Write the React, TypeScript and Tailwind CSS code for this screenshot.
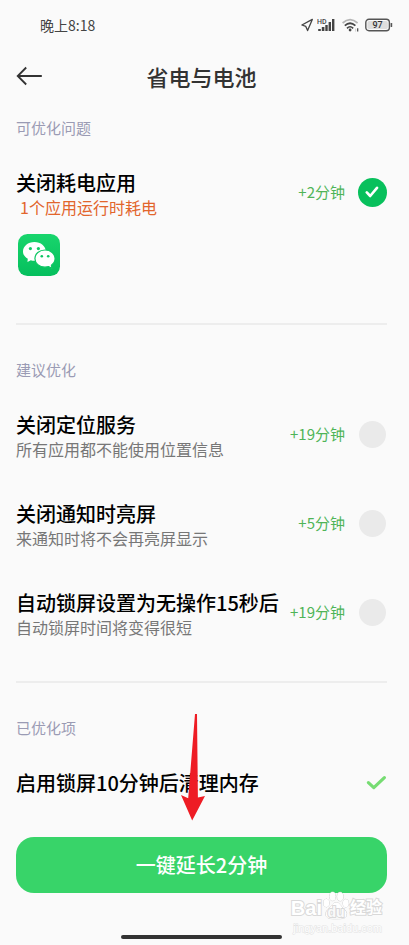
import { useState } from 'react';
import clsx from 'clsx';

interface Suggestion {
  id: string;
  title: string;
  detail: string;
  gain: string;
  warning?: boolean;
}

const issue: Suggestion = {
  id: 'close-apps',
  title: '关闭耗电应用',
  detail: '1个应用运行时耗电',
  gain: '+2分钟',
  warning: true,
};

const suggestions: Suggestion[] = [
  { id: 'location', title: '关闭定位服务', detail: '所有应用都不能使用位置信息', gain: '+19分钟' },
  { id: 'notify', title: '关闭通知时亮屏', detail: '来通知时将不会再亮屏显示', gain: '+5分钟' },
  { id: 'lock', title: '自动锁屏设置为无操作15秒后', detail: '自动锁屏时间将变得很短', gain: '+19分钟' },
];

function StatusBar() {
  return (
    <div className="flex h-[50px] items-center justify-between pl-10 pr-4 text-[#444]">
      <span className="text-sm">晚上8:18</span>
      <div className="flex items-center">
        <svg width="12" height="14" viewBox="0 0 12 14" fill="none" stroke="currentColor" strokeWidth="1.3" strokeLinejoin="round">
          <path d="M11.3 1.4 L0.9 7 L4.8 8.4 L6.6 12.6 Z" />
        </svg>
        <svg className="ml-1" width="19" height="14" viewBox="0 0 19 14" fill="currentColor">
          <text x="0" y="5.5" fontSize="7" fontWeight="500" fontFamily="Roboto, sans-serif">HD</text>
          <rect x="1.2" y="11" width="2.6" height="2" />
          <rect x="4.8" y="9" width="2.6" height="4" />
          <rect x="8.3" y="7" width="2.4" height="6" />
          <rect x="11.6" y="4" width="2.4" height="9" />
          <rect x="15" y="1" width="2.4" height="12" />
        </svg>
        <svg className="ml-1.5" width="17" height="14" viewBox="0 0 17 14" fill="none" strokeWidth="1.7">
          <path d="M0.6 5 Q8 -1.8 15.6 5" stroke="#b5b5b5" />
          <path d="M2.8 7.7 Q8 2.8 13.4 7.7" stroke="currentColor" />
          <path d="M5 10.3 Q8 7.2 11.2 10.3" stroke="currentColor" />
          <circle cx="8.1" cy="12" r="1.4" fill="currentColor" />
          <path d="M15.7 10.2 V13.4" stroke="currentColor" strokeWidth="1.2" />
          <path d="M13.6 10.6 V13.6" stroke="#c8c8c8" strokeWidth="0.8" />
        </svg>
        <svg className="ml-1.5" width="28" height="14" viewBox="0 0 28 14">
          <rect x="0.8" y="1.3" width="23.6" height="11.4" rx="3.2" fill="#fafafa" stroke="#555" strokeWidth="1.4" />
          <rect x="2.4" y="2.9" width="20.4" height="8.2" rx="1.8" fill="#dedede" />
          <rect x="25.6" y="5" width="1.6" height="4" rx="0.6" fill="#555" />
          <text x="12.6" y="10.2" textAnchor="middle" fontSize="9" fontWeight="500" fontFamily="Roboto, sans-serif" fill="#333">97</text>
        </svg>
      </div>
    </div>
  );
}

function SectionLabel({ children }: { children: string }) {
  return <h2 className="mb-[33px] text-[15px] leading-5 text-[#9a9bb4]">{children}</h2>;
}

function Divider() {
  return <hr className="h-0.5 border-0 bg-[#ededed]" />;
}

interface OptionRowProps {
  item: Suggestion;
  checked: boolean;
  onToggle: (id: string) => void;
}

function OptionRow({ item, checked, onToggle }: OptionRowProps) {
  return (
    <label htmlFor={item.id} className="flex items-center justify-between">
      <span className="flex flex-col">
        <span className="whitespace-nowrap text-xl leading-6 font-medium text-black">{item.title}</span>
        <span className={clsx('text-base leading-6', item.warning ? 'pl-1 text-[#e2652c]' : 'text-[#777]')}>
          {item.detail}
        </span>
      </span>
      <span className="flex items-center gap-3 pb-1.5">
        <span className="whitespace-nowrap text-[15px] leading-5 text-[#4fb457]">{item.gain}</span>
        <span className="grid w-[30px] place-items-center">
          <input
            id={item.id}
            type="checkbox"
            checked={checked}
            onChange={() => onToggle(item.id)}
            className="col-start-1 row-start-1 size-[27px] appearance-none rounded-full bg-[#eaeaea] checked:size-[29px] checked:bg-[#08c05c]"
          />
          {checked && (
            <svg
              className="pointer-events-none col-start-1 row-start-1"
              width="14"
              height="12"
              viewBox="0 0 14 12"
              fill="none"
              stroke="white"
              strokeWidth="2.6"
              strokeLinecap="round"
              strokeLinejoin="round"
            >
              <path d="M1.8 6.4 L5.2 10 L12 1.8" />
            </svg>
          )}
        </span>
      </span>
    </label>
  );
}

function WeChatIcon() {
  return (
    <svg className="mt-[15px] ml-0.5" width="42" height="42" viewBox="0 0 42 42">
      <defs>
        <linearGradient id="wechat-bg" x1="0" y1="0" x2="0" y2="1">
          <stop offset="0" stopColor="#18d56c" />
          <stop offset="1" stopColor="#05bf5d" />
        </linearGradient>
      </defs>
      <rect width="42" height="42" rx="9.5" fill="url(#wechat-bg)" />
      <path
        fill="white"
        d="M16.4 8 C10 8 5 12.2 5 17.4 C5 20.4 6.6 23 9.8 24.7 L9.4 28 L12.8 26.2 C13.9 26.6 15 26.8 16.4 26.8 C22.8 26.8 27.8 22.6 27.8 17.4 C27.8 12.2 22.8 8 16.4 8 Z"
      />
      <circle cx="12.4" cy="14.6" r="1.6" fill="#12cb66" />
      <circle cx="20.4" cy="14.6" r="1.6" fill="#12cb66" />
      <path
        fill="white"
        stroke="#0dc763"
        strokeWidth="1.2"
        d="M27 16 C21.3 16 16.9 19.9 16.9 24.6 C16.9 29.3 21.3 33.2 27 33.2 C28.3 33.2 29.5 33 30.6 32.7 L34 34.4 L33.4 31.2 C35.7 29.6 37.1 27.3 37.1 24.6 C37.1 19.9 32.7 16 27 16 Z"
      />
      <circle cx="23.8" cy="22.2" r="1.3" fill="#0bc562" />
      <circle cx="30.2" cy="22.2" r="1.3" fill="#0bc562" />
    </svg>
  );
}

function Watermark() {
  return (
    <div className="pointer-events-none absolute top-[54px] right-[5px] flex flex-col items-end font-[Liberation_Sans,Noto_Sans_CJK_SC,sans-serif] text-white [paint-order:stroke_fill] [-webkit-text-stroke:2px_#d9d9d9]">
      <div className="flex items-end">
        <span className="text-xl leading-6 font-bold">Bai</span>
        <span className="relative">
          <svg width="28" height="29" viewBox="0 0 28 29" fill="white" stroke="#cfcfcf" strokeWidth="1">
            <ellipse cx="4.4" cy="12" rx="2.9" ry="4" />
            <ellipse cx="10.6" cy="5.4" rx="3" ry="4.3" />
            <ellipse cx="18.2" cy="5.6" rx="3" ry="4.3" />
            <ellipse cx="23.8" cy="12.2" rx="2.9" ry="4" />
            <path d="M14.2 11.6 C10.6 11.6 10 15 7.4 17.2 C4.6 19.6 3.2 21.6 4 24.4 C4.8 27.4 7.8 27.8 14.2 27.8 C20.6 27.8 23.6 27.4 24.4 24.4 C25.2 21.6 23.8 19.6 21 17.2 C18.4 15 17.8 11.6 14.2 11.6 Z" />
          </svg>
          <span className="absolute inset-x-0 bottom-0 text-center text-sm leading-4 font-bold text-[#fafafa]">du</span>
        </span>
        <span className="text-base leading-6 font-bold">经验</span>
      </div>
      <span className="text-[11px] leading-4 [-webkit-text-stroke:1px_#e2e2e2]">jingyan.baidu.com</span>
    </div>
  );
}

export default function App() {
  const [selected, setSelected] = useState<string[]>(['close-apps']);

  const toggle = (id: string) => {
    setSelected((prev) => (prev.includes(id) ? prev.filter((s) => s !== id) : [...prev, id]));
  };

  return (
    <div className="min-h-screen overflow-hidden bg-[#fafafa] font-[Noto_Sans_CJK_SC,sans-serif]">
      <StatusBar />

      <div className="pr-[22px] pl-4">
        {/* Header */}
        <header className="relative flex h-[52px] items-center justify-center">
          <button aria-label="返回" className="absolute left-0 text-[#333]">
            <svg width="27" height="20" viewBox="0 0 27 20" fill="none" stroke="currentColor" strokeWidth="1.8">
              <path d="M1.6 10 H25.8 M10.2 1.5 L1.7 10 L10.2 18.5" />
            </svg>
          </button>
          <h1 className="text-[22px] leading-8 font-medium text-[#333]">省电与电池</h1>
        </header>

        {/* Issues */}
        <section className="pt-4 pb-[47px]">
          <SectionLabel>可优化问题</SectionLabel>
          <OptionRow item={issue} checked={selected.includes(issue.id)} onToggle={toggle} />
          <WeChatIcon />
        </section>

        <Divider />

        {/* Suggestions */}
        <section className="pt-[35px] pb-[42px]">
          <SectionLabel>建议优化</SectionLabel>
          <div className="flex flex-col gap-[41px]">
            {suggestions.map((item) => (
              <OptionRow key={item.id} item={item} checked={selected.includes(item.id)} onToggle={toggle} />
            ))}
          </div>
        </section>

        <Divider />

        {/* Already optimized */}
        <section className="relative pt-[35px] pb-[42px]">
          <SectionLabel>已优化项</SectionLabel>
          <div className="flex items-center justify-between">
            <span className="text-xl leading-6 font-medium text-black">启用锁屏10分钟后清理内存</span>
            <svg width="21" height="16" viewBox="0 0 21 16" fill="none" stroke="#76dc72" strokeWidth="3.2" strokeLinecap="round" strokeLinejoin="round">
              <path d="M2.4 7.6 L7.8 12.6 L18.4 2.6" />
            </svg>
          </div>
          <svg className="pointer-events-none absolute bottom-4 left-[164px]" width="26" height="108" viewBox="0 0 26 108" fill="#ee1c24">
            <path d="M15 1 H17 L17.9 84.5 L25 83 L12.2 107.5 L1 82 L8.2 85.2 Z" />
          </svg>
        </section>

        {/* Footer */}
        <footer className="relative pb-1.5">
          <button className="h-14 w-full rounded-[18px] bg-[#38d469] text-xl font-medium text-white">
            一键延长2分钟
          </button>
          <Watermark />
          <div className="mx-auto mt-[42px] h-1 w-[161px] rounded-full bg-[#333]" />
        </footer>
      </div>
    </div>
  );
}
